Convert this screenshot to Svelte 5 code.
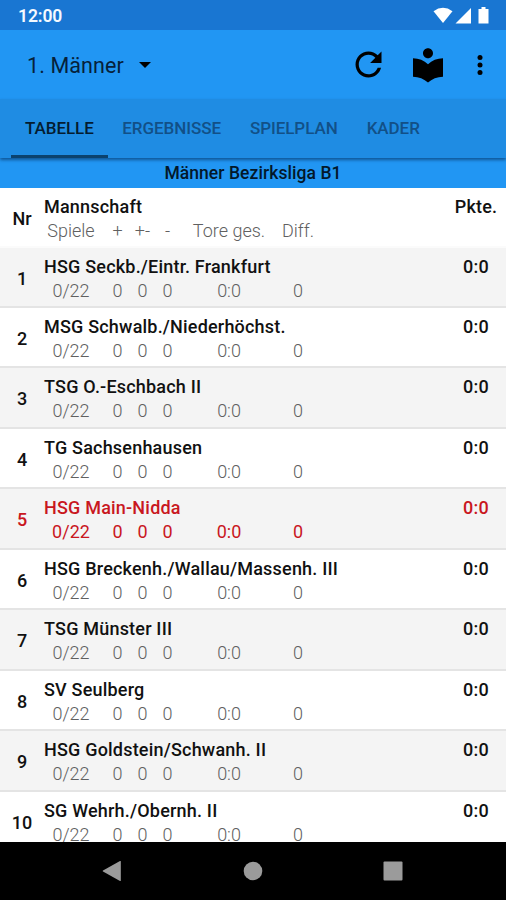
<script>
  const teams = [
    'HSG Seckb./Eintr. Frankfurt',
    'MSG Schwalb./Niederhöchst.',
    'TSG O.-Eschbach II',
    'TG Sachsenhausen',
    'HSG Main-Nidda',
    'HSG Breckenh./Wallau/Massenh. III',
    'TSG Münster III',
    'SV Seulberg',
    'HSG Goldstein/Schwanh. II',
    'SG Wehrh./Obernh. II'
  ];
  const stats = ['0/22', '0', '0', '0', '0:0', '0'];
  const labels = ['Spiele', '+', '+-', '-', 'Tore ges.', 'Diff.'];
  const tabs = ['TABELLE', 'ERGEBNISSE', 'SPIELPLAN', 'KADER'];
  const ownTeam = 4;
</script>

<div class="screen">
  <header class="status">
    <span class="clock">12:00</span>
    <svg width="58" height="18" viewBox="0 0 58 18" fill="#fff">
      <path d="M0.5 4.2Q10 -2.6 19.5 4.2L10 16Z" />
      <path d="M22.500 16.500L38 1v15.500Z" />
      <path d="M48.500 0h4v2h3v14.500h-10V2h3z" />
    </svg>
  </header>

  <div class="toolbar">
    <span class="title">1. Männer</span>
    <svg class="caret" width="12" height="6" viewBox="0 0 12 6"><path d="M0 0h12L6 6z" /></svg>
    <span class="grow"></span>
    <svg class="refresh" width="39" height="39" viewBox="0 0 24 24">
      <path d="M17.650 6.350C16.200 4.900 14.210 4 12 4c-4.420 0-7.990 3.580-7.990 8s3.570 8 7.990 8c3.730 0 6.840-2.550 7.730-6h-2.080c-.82 2.330-3.040 4-5.650 4-3.310 0-6-2.690-6-6s2.690-6 6-6c1.660 0 3.140.69 4.220 1.780L13 11h7V4l-2.350 2.350z" />
    </svg>
    <svg class="reader" width="40" height="40" viewBox="0 0 24 24">
      <path d="M12 11.550C9.640 9.350 6.480 8 3 8v11c3.480 0 6.640 1.350 9 3.550 2.360-2.190 5.520-3.550 9-3.550V8c-3.480 0-6.640 1.350-9 3.550zM12 8c1.660 0 3-1.340 3-3s-1.340-3-3-3-3 1.340-3 3 1.340 3 3 3z" />
    </svg>
    <svg class="more" width="6" height="22" viewBox="0 0 6 22">
      <circle cx="3" cy="3.500" r="2.500" /><circle cx="3" cy="11" r="2.500" /><circle cx="3" cy="18.500" r="2.500" />
    </svg>
  </div>

  <nav class="tabs">
    {#each tabs as tab, i}
      <span class="tab" class:active={i === 0}><span>{tab}</span></span>
    {/each}
  </nav>

  <div class="league">Männer Bezirksliga B1</div>

  <main>
    <div class="row head">
      <span class="nr">Nr</span>
      <div class="info">
        <div class="name">Mannschaft</div>
        <div class="stats">{#each labels as label}<span>{label}</span>{/each}</div>
      </div>
      <span class="points">Pkte.</span>
    </div>
    {#each teams as team, i}
      <div class="row" class:shaded={i % 2 === 0} class:own={i === ownTeam}>
        <span class="nr">{i + 1}</span>
        <div class="info">
          <div class="name">{team}</div>
          <div class="stats">{#each stats as value}<span>{value}</span>{/each}</div>
        </div>
        <span class="points">0:0</span>
      </div>
    {/each}
  </main>

  <footer>
    <svg width="20" height="22" viewBox="0 0 20 22"><path d="M1 10.500L18 1q.8-.3.800.500v19q0 .8-.8.500L1 11.500q-.7-.5 0-1z" /></svg>
    <svg width="20" height="20" viewBox="0 0 20 20"><circle cx="10" cy="10" r="9.300" /></svg>
    <svg width="20" height="20" viewBox="0 0 20 20"><rect x=".5" y=".5" width="19" height="19" rx="1" /></svg>
  </footer>
</div>

<style>
  .screen {
    width: 506px;
    height: 900px;
    display: flex;
    flex-direction: column;
    overflow: hidden;
    background: #fff;
    color: #111;
    font-family: Roboto, sans-serif;
    white-space: nowrap;
  }
  svg { display: block; flex: none; }
  .status {
    flex: none;
    height: 30px;
    box-sizing: border-box;
    padding: 7px 16px 0 18px;
    display: flex;
    justify-content: space-between;
    background: #1976d2;
  }
  .clock { color: #f4f9ff; font-size: 17.500px; font-weight: 600; line-height: 19px; letter-spacing: -0.1px; }
  .status svg { margin-right: -1px; }
  .toolbar {
    flex: none;
    height: 69px;
    display: flex;
    align-items: center;
    padding: 0 23px 0 27px;
    background: #2196f3;
  }
  .title { width: 112px; padding-top: 1px; font-size: 21.500px; color: #06213a; letter-spacing: 0.1px; }
  .grow { flex: 1; }
  .refresh { margin-right: 20px; }
  .reader { margin-right: 29px; }
  .tabs {
    flex: none;
    position: relative;
    z-index: 1;
    height: 59px;
    display: flex;
    padding-left: 11px;
    background: #1f8ce3;
    box-shadow: 0 2px 3px rgba(0, 35, 75, 0.55);
  }
  .tab {
    box-sizing: border-box;
    height: 59px;
    padding: 0 14.500px;
    line-height: 59px;
    font-size: 17px;
    font-weight: 500;
    letter-spacing: -0.06px;
    color: #125087;
  }
  .active { padding: 0 14px; border-bottom: 3px solid #0b426e; color: #041c30; }
  .league {
    flex: none;
    height: 29.600px;
    line-height: 30px;
    text-align: center;
    background: #2196f3;
    font-size: 17.500px;
    font-weight: 500;
    letter-spacing: 0.07px;
    color: #03182a;
  }
  main { flex: 1; min-height: 0; overflow: hidden; }
  .row {
    box-sizing: border-box;
    height: 60.440px;
    display: flex;
    border-bottom: 2px solid #e4e4e4;
  }
  .head { height: 60px; border-bottom-color: #fbfbfb; }
  .shaded { background: #f4f4f4; }
  .nr {
    width: 44px;
    text-align: center;
    line-height: 61px;
    font-size: 18px;
    font-weight: 500;
  }
  .info { flex: 1; padding-top: 7px; }
  .name, .points { font-size: 18px; font-weight: 500; line-height: 24px; letter-spacing: 0.2px; }
  .points { width: 60px; text-align: center; padding-top: 7px; }
  .stats { display: flex; font-size: 18px; line-height: 24px; font-weight: 300; color: #606060; }
  .stats span { width: 25px; text-align: center; }
  .stats span:first-child { width: 54px; margin-right: 7px; }
  .stats span:nth-child(5) { width: 98px; }
  .stats span:nth-child(6) { width: 40px; }
  .own, .own .stats { color: #c9171e; }
  .own .stats { font-weight: 400; }
  footer {
    flex: none;
    height: 58px;
    display: flex;
    align-items: center;
    justify-content: space-between;
    padding: 0 103px 0 102px;
    background: #000;
  }
  footer svg { fill: #9b9b9b; }
</style>
